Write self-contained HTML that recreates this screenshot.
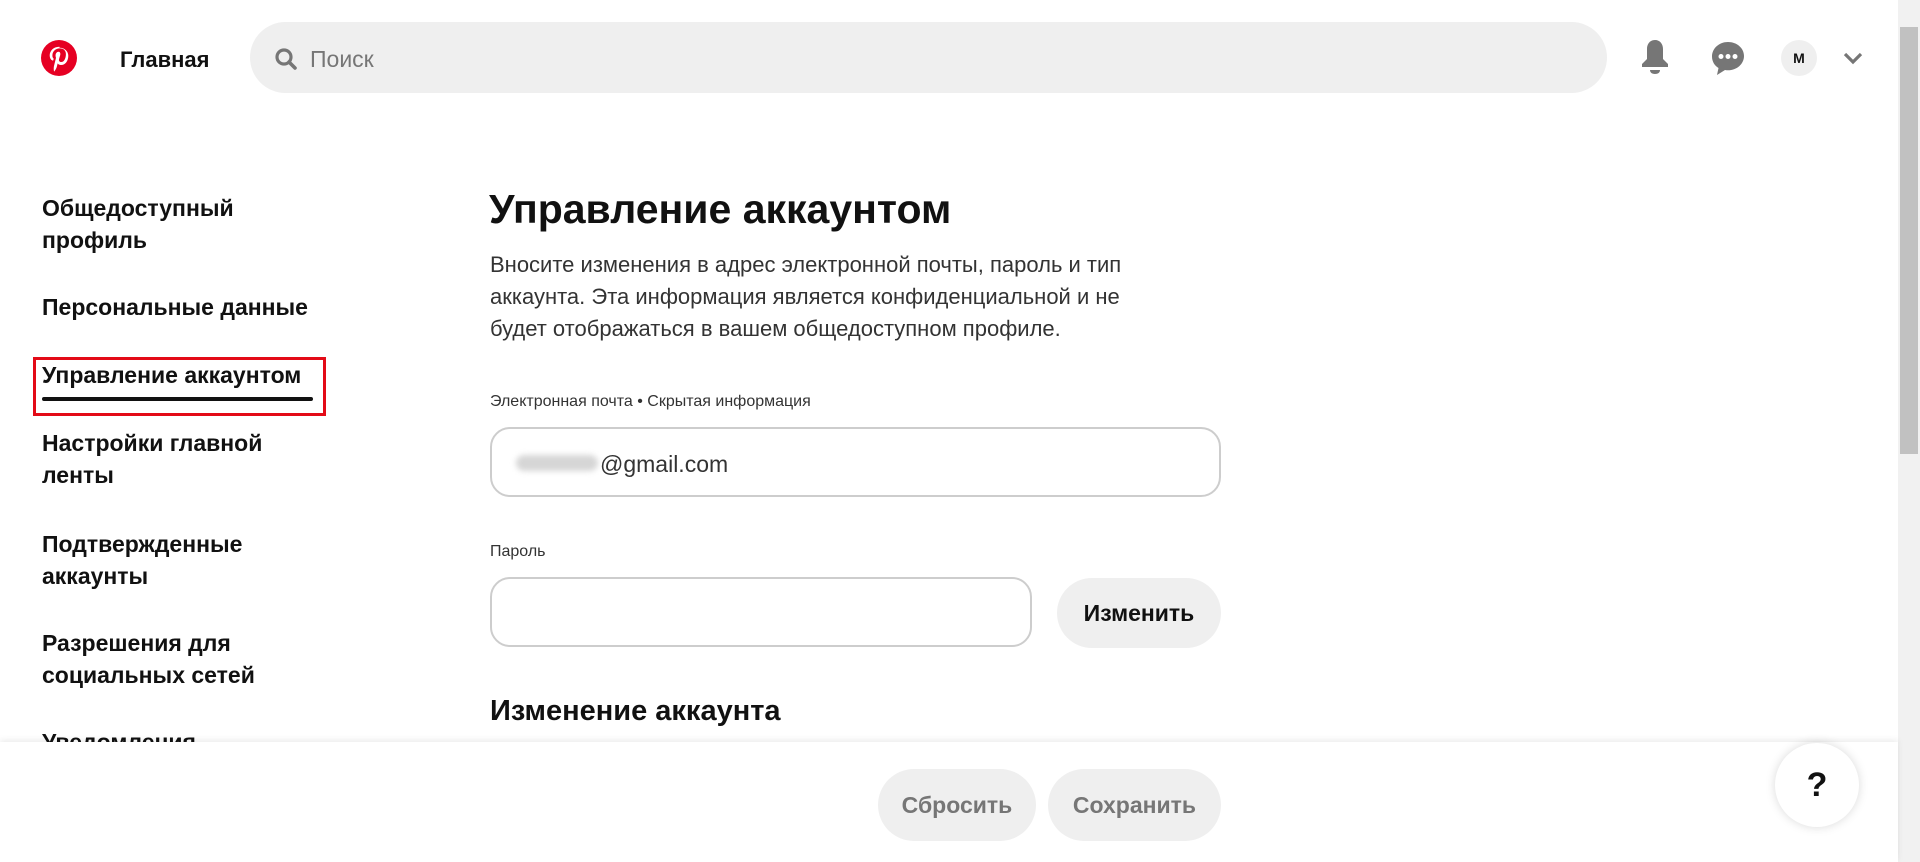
<!DOCTYPE html>
<html><head><meta charset="utf-8">
<style>
*{margin:0;padding:0;box-sizing:border-box}
html,body{width:1920px;height:862px;overflow:hidden;background:#fff;font-family:"Liberation Sans","DejaVu Sans",sans-serif;color:#111}
.abs{position:absolute}
.side{position:absolute;left:42px;font-weight:bold;font-size:23px;line-height:32px;color:#111}
.input{position:absolute;border:2px solid #cdcdcd;border-radius:20px;background:#fff}
.btn{position:absolute;background:#efefef;border-radius:36px;font-weight:bold;font-size:23px;display:flex;align-items:center;justify-content:center}
</style></head><body>
<!-- header -->
<svg class="abs" style="left:41px;top:40px" width="36" height="36" viewBox="0 0 24 24"><circle cx="12" cy="12" r="12" fill="#e60023"/><path d="M12.3 4.5c-4.3 0-6.5 3.1-6.5 5.7 0 1.6.6 3 1.9 3.5.2.1.4 0 .5-.2l.2-.8c.1-.2 0-.3-.2-.5-.4-.5-.6-1.1-.6-1.9 0-2.5 1.9-4.7 4.9-4.7 2.7 0 4.1 1.6 4.1 3.8 0 2.9-1.3 5.3-3.1 5.3-1 0-1.8-.8-1.5-1.9.3-1.3.9-2.6.9-3.5 0-.8-.4-1.5-1.3-1.5-1 0-1.9 1.1-1.9 2.5 0 .9.3 1.5.3 1.5l-1.3 5.4c-.4 1.6-.1 3.5 0 3.7 0 .1.2.1.2 0 .1-.1 1.2-1.5 1.6-2.9l.6-2.4c.3.6 1.2 1.1 2.2 1.1 2.9 0 4.9-2.7 4.9-6.2 0-2.7-2.3-5.3-5.8-5.3z" fill="#fff"/></svg>
<div class="abs" style="left:120px;top:47px;font-weight:bold;font-size:22px">Главная</div>
<div class="abs" style="left:250px;top:22px;width:1357px;height:71px;border-radius:36px;background:#efefef"></div>
<svg class="abs" style="left:274px;top:47px" width="24" height="24" viewBox="0 0 24 24"><circle cx="10" cy="10" r="7" fill="none" stroke="#767676" stroke-width="3.2"/><path d="M15 15l6 6" stroke="#767676" stroke-width="3.6" stroke-linecap="round"/></svg>
<div class="abs" style="left:310px;top:46px;font-size:23px;color:#767676">Поиск</div>
<svg class="abs" style="left:1638px;top:38px" width="34" height="38" viewBox="0 0 34 38"><path d="M17 2c-5 0-8 4-8 9v10l-5 5v3h26v-3l-5-5V11c0-5-3-9-8-9z" fill="#767676"/><path d="M12 32h10c0 2.5-2 4-5 4s-5-1.5-5-4z" fill="#767676"/></svg>
<svg class="abs" style="left:1710px;top:40px" width="36" height="36" viewBox="0 0 36 36"><path d="M18 2C9 2 2 8.5 2 16.5c0 5 2.5 9 6.5 11.5L7 35l8-5c1 .2 2 .3 3 .3 9 0 16-6.5 16-14.3S27 2 18 2z" fill="#767676"/><circle cx="11" cy="16.5" r="2.5" fill="#fff"/><circle cx="18" cy="16.5" r="2.5" fill="#fff"/><circle cx="25" cy="16.5" r="2.5" fill="#fff"/></svg>
<div class="abs" style="left:1781px;top:40px;width:36px;height:36px;border-radius:50%;background:#efefef;font-size:14px;font-weight:bold;display:flex;align-items:center;justify-content:center">M</div>
<svg class="abs" style="left:1843px;top:51px" width="20" height="14" viewBox="0 0 20 14"><path d="M2 3l8 8 8-8" fill="none" stroke="#767676" stroke-width="3.2"/></svg>
<!-- scrollbar -->
<div class="abs" style="left:1898px;top:0;width:22px;height:862px;background:#f1f1f1"></div>
<div class="abs" style="left:1900px;top:27px;width:18px;height:427px;background:#c1c1c1"></div>
<!-- sidebar -->
<div class="side" style="top:192px">Общедоступный<br>профиль</div>
<div class="side" style="top:291px">Персональные данные</div>
<div class="side" style="top:359px">Управление аккаунтом</div>
<div class="abs" style="left:42px;top:397px;width:271px;height:4px;background:#111;border-radius:2px"></div>
<div class="abs" style="left:33px;top:357px;width:293px;height:59px;border:3px solid #e30b17"></div>
<div class="side" style="top:427px">Настройки главной<br>ленты</div>
<div class="side" style="top:528px">Подтвержденные<br>аккаунты</div>
<div class="side" style="top:627px">Разрешения для<br>социальных сетей</div>
<div class="side" style="top:726px">Уведомления</div>
<!-- main -->
<div class="abs" style="left:489px;top:186px;font-weight:bold;font-size:41px">Управление аккаунтом</div>
<div class="abs" style="left:490px;top:249px;width:680px;font-size:22px;line-height:32px;color:#333">Вносите изменения в адрес электронной почты, пароль и тип аккаунта. Эта информация является конфиденциальной и не будет отображаться в вашем общедоступном профиле.</div>
<div class="abs" style="left:490px;top:393px;font-size:16px;color:#333">Электронная почта • Скрытая информация</div>
<div class="input" style="left:490px;top:427px;width:731px;height:70px"></div>
<div class="abs" style="left:516px;top:455px;width:82px;height:16px;background:#d6d6d6;border-radius:8px;filter:blur(3px)"></div>
<div class="abs" style="left:600px;top:451px;font-size:23px;color:#333">@gmail.com</div>
<div class="abs" style="left:490px;top:543px;font-size:16px;color:#333">Пароль</div>
<div class="input" style="left:490px;top:577px;width:542px;height:70px"></div>
<div class="btn" style="left:1057px;top:578px;width:164px;height:70px">Изменить</div>
<div class="abs" style="left:490px;top:695px;font-weight:bold;font-size:29px">Изменение аккаунта</div>
<!-- footer -->
<div class="abs" style="left:0;top:742px;width:1898px;height:120px;background:#fff;box-shadow:0 -2px 6px rgba(0,0,0,0.08)"></div>
<div class="btn" style="left:878px;top:769px;width:158px;height:72px;color:#767676">Сбросить</div>
<div class="btn" style="left:1048px;top:769px;width:173px;height:72px;color:#767676">Сохранить</div>
<div class="abs" style="left:1775px;top:743px;width:84px;height:84px;border-radius:50%;background:#fff;box-shadow:0 0 10px rgba(0,0,0,0.15);display:flex;align-items:center;justify-content:center;font-weight:bold;font-size:34px">?</div>
</body></html>
